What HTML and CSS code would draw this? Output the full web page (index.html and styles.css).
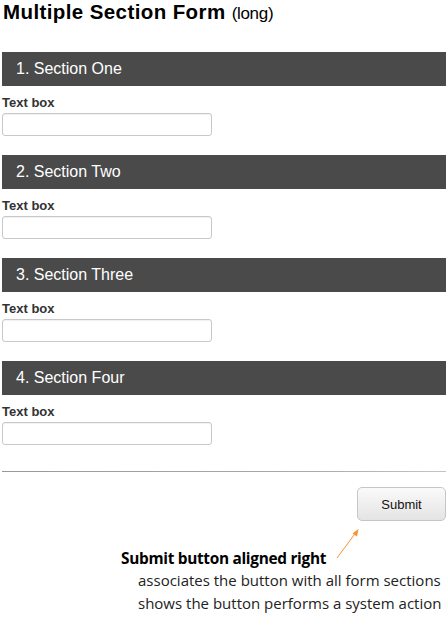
FILE: index.html
```html
<!DOCTYPE html>
<html>
<head>
<meta charset="utf-8">
<link rel="stylesheet" href="styles.css">
</head>
<body>
<h1 class="title">Multiple Section Form <span class="title-note">(long)</span></h1>
<form class="form">
  <section class="section">
    <h2 class="section-head">1. Section One</h2>
    <label class="field-label">Text box</label>
    <input class="text-input" type="text">
  </section>
  <section class="section">
    <h2 class="section-head">2. Section Two</h2>
    <label class="field-label">Text box</label>
    <input class="text-input" type="text">
  </section>
  <section class="section">
    <h2 class="section-head">3. Section Three</h2>
    <label class="field-label">Text box</label>
    <input class="text-input" type="text">
  </section>
  <section class="section">
    <h2 class="section-head">4. Section Four</h2>
    <label class="field-label">Text box</label>
    <input class="text-input" type="text">
  </section>
  <hr class="divider">
  <div class="actions">
    <button class="submit" type="button">Submit</button>
    <svg class="arrow" width="26" height="34" viewBox="0 0 26 34">
      <path d="M2 32 L22 5" stroke="#f7922e" stroke-width="1" fill="none"/>
      <path d="M23.5 3 L17.5 7.5 L22 10.5 Z" fill="#f7922e"/>
    </svg>
  </div>
</form>
<div class="note">
  <p class="note-title">Submit button aligned right</p>
  <p class="note-line">associates the button with all form sections</p>
  <p class="note-line">shows the button performs a system action</p>
</div>
</body>
</html>
```
FILE: styles.css
```css
html, body {
  margin: 0;
  padding: 0;
  background: #fff;
}
body {
  width: 448px;
  height: 622px;
  overflow: hidden;
  position: relative;
}
.title {
  margin: 0;
  padding: 0 0 0 3px;
  height: 52px;
  box-sizing: border-box;
  font-family: "Liberation Sans", Arial, sans-serif;
  font-weight: 700;
  font-size: 20.5px;
  line-height: 23px;
  letter-spacing: 0.4px;
  color: #000;
}
.title-note {
  font-weight: 400;
  font-size: 17px;
  letter-spacing: -0.3px;
}
.form {
  margin: 0;
  padding: 0 2px;
}
.section {
  height: 103px;
  display: flex;
  flex-direction: column;
  align-items: flex-start;
}
.section-head {
  margin: 0;
  align-self: stretch;
  height: 34px;
  box-sizing: border-box;
  padding: 6px 0 0 14px;
  background: #4a4a4a;
  color: #fff;
  font-family: "Liberation Sans", Arial, sans-serif;
  font-weight: 400;
  font-size: 16px;
  line-height: 22px;
}
.field-label {
  margin-top: 9px;
  font-family: "Liberation Sans", Arial, sans-serif;
  font-weight: 700;
  font-size: 13px;
  line-height: 15px;
  color: #333;
}
.text-input {
  margin: 3px 0 0 0;
  width: 210px;
  height: 23px;
  box-sizing: border-box;
  border: 1px solid #c8c8c8;
  border-radius: 3px;
  box-shadow: inset 0 1px 1px rgba(0,0,0,0.06);
  padding: 0;
}
.divider {
  margin: 7px 0 0 0;
  border: 0;
  height: 1px;
  background: linear-gradient(to right, #999 0%, #aaa 70%, #c4c4c4 100%);
}
.actions {
  position: relative;
  display: flex;
  justify-content: flex-end;
  padding-top: 15px;
}
.submit {
  width: 89px;
  height: 34px;
  border: 1px solid #c6c6c6;
  border-radius: 5px;
  background: linear-gradient(to bottom, #fafafa 0%, #e4e4e4 100%);
  font-family: "Liberation Sans", Arial, sans-serif;
  font-size: 13px;
  color: #111;
  padding: 0;
}
.arrow {
  position: absolute;
  left: 333px;
  top: 54px;
}
.note {
  padding-left: 121px;
  margin-top: 28px;
  font-family: "Open Sans", sans-serif;
  color: #222;
}
.note p {
  margin: 0;
}
.note-title {
  font-weight: 700;
  font-size: 15.4px;
  line-height: 20px;
  letter-spacing: -0.3px;
  color: #000;
}
.note-line {
  padding-left: 17px;
  font-size: 15px;
  line-height: 23px;
  letter-spacing: 0px;
}
```
